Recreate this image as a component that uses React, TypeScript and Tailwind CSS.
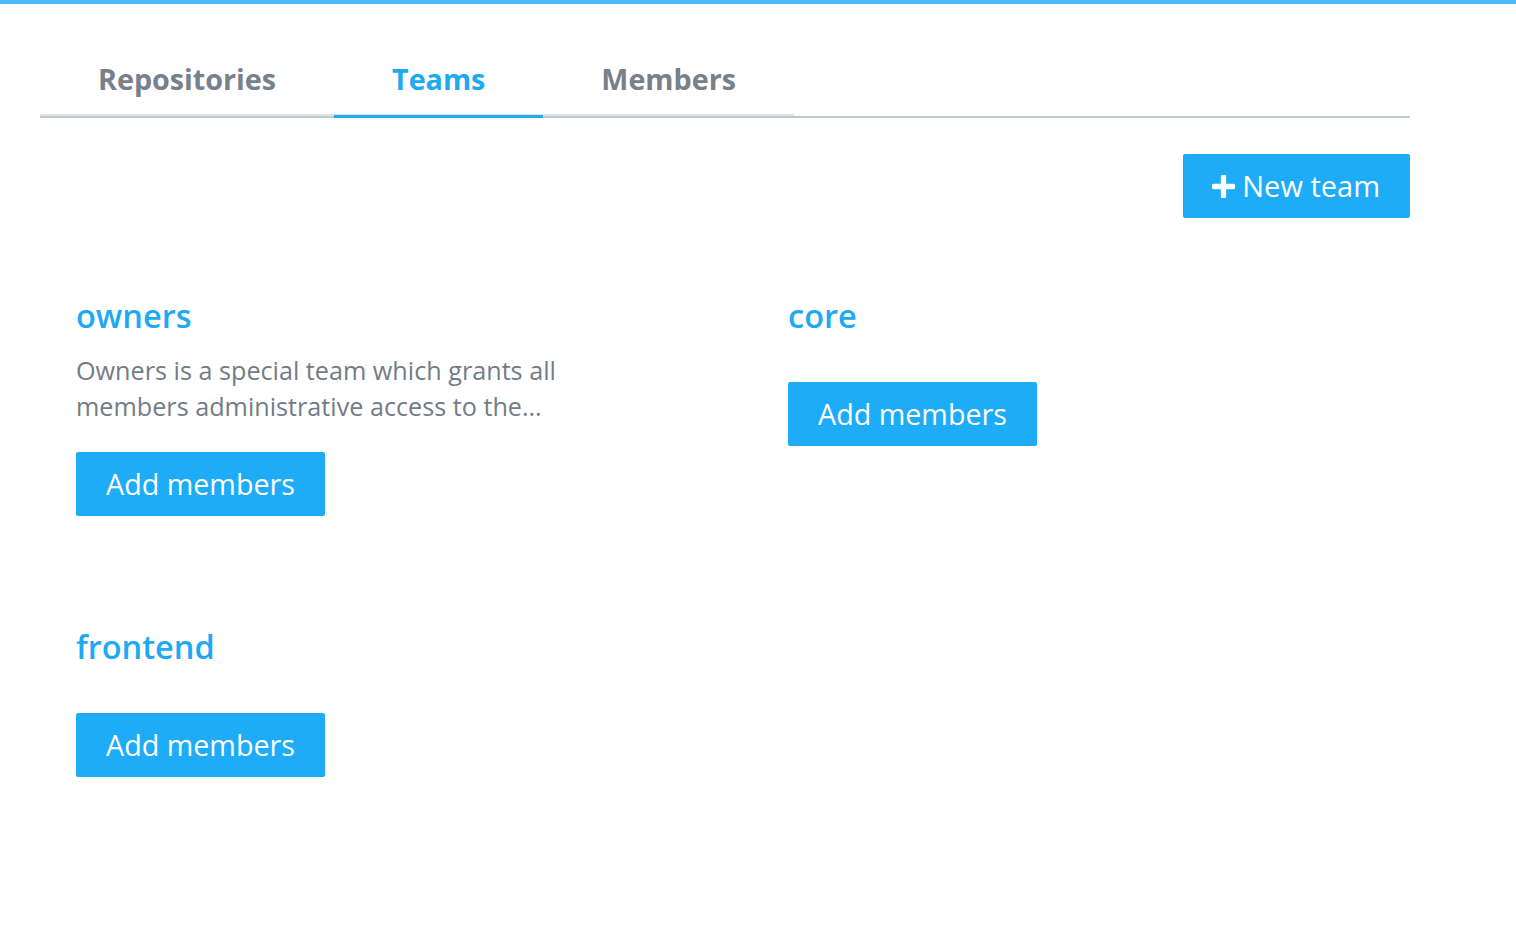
import React from 'react';

const tabs = [
  { label: 'Repositories', active: false },
  { label: 'Teams', active: true },
  { label: 'Members', active: false },
];

const teams = [
  {
    name: 'owners',
    description:
      'Owners is a special team which grants all members administrative access to the organization.',
  },
  { name: 'core' },
  { name: 'frontend' },
];

function TeamCard({ name, description }: { name: string; description?: string }) {
  return (
    <div className="flex flex-col items-start">
      <h2 className="text-[32.5px] leading-[38px] font-semibold text-[#1ea9f3]">{name}</h2>
      {description ? (
        <>
          <p className="mt-[17px] w-[520px] text-[25.2px] leading-[36px] text-[#737c85] line-clamp-2">
            {description}
          </p>
          <button className="mt-[28px] h-16 px-[30px] rounded-[2px] bg-[#1eabf8] text-white text-[28.7px]">
            Add members
          </button>
        </>
      ) : (
        <button className="mt-[47px] h-16 px-[30px] rounded-[2px] bg-[#1eabf8] text-white text-[28.7px]">
          Add members
        </button>
      )}
    </div>
  );
}

export default function App() {
  return (
    <div className="min-h-screen bg-white font-['Open_Sans',sans-serif]">
      {/* top accent bar */}
      <div className="h-1 bg-[#4bbcf8]" />

      <div className="ml-10 w-[1370px]">
        {/* tabs */}
        <ul className="mt-[54px] flex border-b-2 border-[#c0cacb]">
          {tabs.map((t) => (
            <li
              key={t.label}
              className={`relative px-[58px] pb-[14px] border-b-2 border-[#dfe4ea] text-[28.7px] leading-[42px] font-bold ${
                t.active ? 'text-[#1ea9f3]' : 'text-[#78808b]'
              }`}
            >
              {t.label}
              {t.active && (
                <span className="absolute left-0 right-0 top-full mt-px h-[3px] bg-[#1ea9f3]" />
              )}
            </li>
          ))}
        </ul>

        <div className="mt-9 flex justify-end">
          <button className="h-16 pl-[29px] pr-[30px] rounded-[2px] bg-[#1eabf8] text-white text-[29px] flex items-center gap-[7px]">
            <svg width="23" height="23" viewBox="0 0 24 24" className="shrink-0">
              <path d="M12 2v20M2 12h20" stroke="white" strokeWidth="5.5" strokeLinecap="round" />
            </svg>
            New team
          </button>
        </div>

        {/* teams grid */}
        <div className="mt-[79px] pl-9 grid grid-cols-[712px_1fr] gap-y-[112px]">
          {teams.map((t) => (
            <TeamCard key={t.name} name={t.name} description={t.description} />
          ))}
        </div>
      </div>
    </div>
  );
}
